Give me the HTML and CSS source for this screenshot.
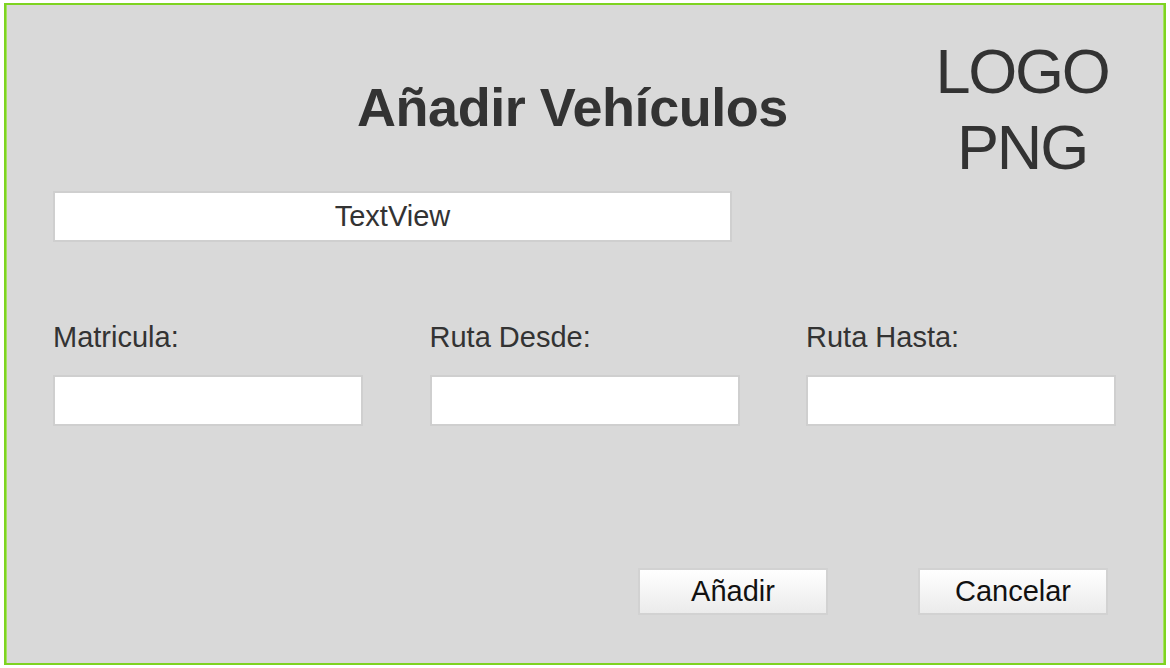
FILE: index.html
```html
<!DOCTYPE html>
<html lang="es">
<head>
<meta charset="utf-8">
<title>Añadir Vehículos</title>
<link rel="stylesheet" href="styles.css">
</head>
<body>
<div class="frame">
  <header class="header">
    <h1 class="title">Añadir Vehículos</h1>
    <div class="logo">LOGO<br>PNG</div>
  </header>
  <div class="textview">TextView</div>
  <div class="fields">
    <label class="field">
      <span class="label">Matricula:</span>
      <span class="input"></span>
    </label>
    <label class="field">
      <span class="label">Ruta Desde:</span>
      <span class="input"></span>
    </label>
    <label class="field">
      <span class="label">Ruta Hasta:</span>
      <span class="input"></span>
    </label>
  </div>
  <div class="actions">
    <button class="btn">Añadir</button>
    <button class="btn">Cancelar</button>
  </div>
</div>
</body>
</html>
```

FILE: styles.css
```css
html, body {
  margin: 0;
  padding: 0;
  background: #ffffff;
}

body {
  font-family: "Liberation Sans", Arial, sans-serif;
  color: #333333;
}

.frame {
  box-sizing: border-box;
  margin: 3px 0 0 4px;
  width: 1162px;
  height: 662px;
  background: #d9d9d9;
  border: 2px solid #7ed321;
  box-shadow: inset 1px 0 0 #a3e35f, inset -1px 0 0 #a3e35f;
  padding: 28px 47px 48px 47px;
  display: flex;
  flex-direction: column;
}

.header {
  display: flex;
  align-items: flex-start;
  padding: 0 6px 0 304px;
  height: 152px;
}

.title {
  margin: 43px 0 0 0;
  font-size: 54px;
  line-height: 62px;
  font-weight: bold;
  letter-spacing: -0.45px;
  color: #333333;
}

.logo {
  margin-left: auto;
  width: 178px;
  text-align: center;
  font-size: 63px;
  line-height: 76px;
  letter-spacing: -2.2px;
  color: #333333;
}

.logo-second {
  display: inline-block;
}

.textview {
  box-sizing: border-box;
  margin-top: 6px;
  width: 679px;
  height: 51px;
  background: #ffffff;
  border: 2px solid #cfcfcf;
  display: flex;
  align-items: center;
  justify-content: center;
  font-size: 29px;
  color: #333333;
}

.fields {
  margin-top: 78px;
  display: grid;
  grid-template-columns: repeat(3, 310px);
  column-gap: 66.5px;
}

.field {
  display: flex;
  flex-direction: column;
}

.label {
  font-size: 29px;
  line-height: 34px;
  color: #333333;
}

.input {
  box-sizing: border-box;
  margin-top: 21px;
  height: 51px;
  background: #ffffff;
  border: 2px solid #cfcfcf;
}

.actions {
  margin-top: auto;
  display: flex;
  justify-content: flex-end;
  gap: 90px;
  padding-right: 9px;
}

.btn {
  box-sizing: border-box;
  width: 190px;
  height: 47px;
  border: 2px solid #d2d2d2;
  border-radius: 0;
  background: linear-gradient(#ffffff, #ebebeb);
  font-family: "Liberation Sans", Arial, sans-serif;
  font-size: 29px;
  color: #111111;
  padding: 0;
}
```
